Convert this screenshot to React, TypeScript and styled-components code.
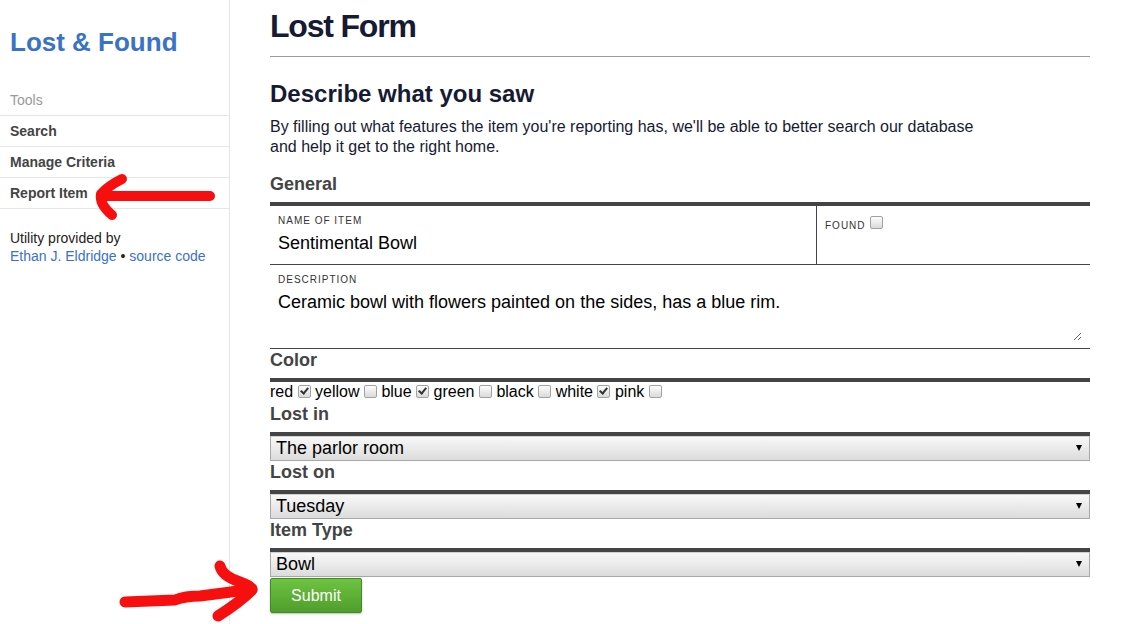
import React from "react";
import styled, { createGlobalStyle } from "styled-components";

const GlobalStyle = createGlobalStyle`
  html, body { margin: 0; padding: 0; background: #fff; }
  body { font-family: "Liberation Sans", Arial, sans-serif; }
  * { box-sizing: border-box; }
`;

const Page = styled.div`
  position: relative;
  display: flex;
  min-height: 624px;
  font-family: "Liberation Sans", Arial, sans-serif;
`;

const Sidebar = styled.aside`
  width: 230px;
  flex: 0 0 230px;
  border-right: 1px solid #e6e6e6;
  min-height: 624px;
`;

const Brand = styled.h1`
  margin: 0;
  padding: 27px 10px 0;
  font-size: 26px;
  line-height: 30px;
  font-weight: bold;
  color: #3a72c8;
`;

const NavHeading = styled.div`
  margin-top: 28px;
  padding: 7px 10px 7px;
  font-size: 14px;
  line-height: 16px;
  color: #9a9a9a;
`;

const NavList = styled.nav`
  display: flex;
  flex-direction: column;
  border-bottom: 1px solid #e6e6e6;
`;

const NavItem = styled.a`
  display: block;
  border-top: 1px solid #e6e6e6;
  padding: 7px 10px;
  font-size: 14px;
  line-height: 16px;
  font-weight: bold;
  color: #444;
  text-decoration: none;
`;

const Credits = styled.p`
  margin: 20px 0 0;
  padding: 0 10px;
  font-size: 14px;
  line-height: 18px;
  color: #222;
`;

const Link = styled.a`
  color: #3a72c8;
  text-decoration: none;
`;

const Main = styled.main`
  width: 820px;
  margin-left: 40px;
`;

const Title = styled.h1`
  margin: 0;
  padding-top: 8px;
  font-size: 32px;
  line-height: 36px;
  font-weight: bold;
  color: #161a33;
  letter-spacing: -1.2px;
`;

const Rule = styled.hr`
  margin: 12px 0 0;
  border: 0;
  border-top: 1px solid #9c9c9c;
  height: 0;
`;

const Subtitle = styled.h2`
  margin: 23px 0 0;
  font-size: 24px;
  line-height: 28px;
  font-weight: bold;
  color: #161a33;
`;

const Intro = styled.p`
  margin: 9px 0 0;
  max-width: 710px;
  font-size: 16px;
  line-height: 20px;
  color: #161a33;
`;

const Section = styled.section<{ $gap?: number }>`
  margin-top: ${(p) => p.$gap ?? 0}px;
`;

const SectionLabel = styled.h3`
  margin: 0 0 8px;
  font-size: 18px;
  line-height: 20px;
  font-weight: bold;
  color: #444;
`;

const Bar = styled.div`
  border-top: 4px solid #444;
  position: relative;
`;

const FieldGrid = styled.div`
  display: grid;
  grid-template-columns: 546px 1fr;
`;

const Cell = styled.div<{ $side?: boolean; $wide?: boolean }>`
  grid-column: ${(p) => (p.$wide ? "1 / span 2" : "auto")};
  border-bottom: 1px solid #444;
  border-left: ${(p) => (p.$side ? "1px solid #444" : "0")};
  padding: 9px 8px 10px;
`;

const Caption = styled.label`
  display: block;
  font-size: 10px;
  line-height: 12px;
  letter-spacing: 1px;
  text-transform: uppercase;
  color: #333;
  margin-bottom: 5px;
`;

const InlineCaption = styled(Caption)`
  display: inline-flex;
  align-items: flex-start;
  gap: 3px;
  margin-top: 0;
`;

const ValueInput = styled.input`
  display: block;
  width: 100%;
  border: 0;
  padding: 0;
  margin: 0;
  font-family: "Liberation Sans", Arial, sans-serif;
  font-size: 18px;
  line-height: 22px;
  height: 22px;
  color: #000;
  background: transparent;
  outline: none;
`;

const TextArea = styled.textarea`
  display: block;
  width: 100%;
  height: 50px;
  border: 0;
  padding: 0;
  margin: 0 0 -3px;
  font-family: "Liberation Sans", Arial, sans-serif;
  font-size: 18px;
  line-height: 22px;
  color: #000;
  background: transparent;
  outline: none;
  resize: vertical;
`;

const Check = styled.input.attrs({ type: "checkbox" })`
  appearance: none;
  -webkit-appearance: none;
  position: relative;
  width: 13px;
  height: 13px;
  margin: 0;
  vertical-align: -1px;
  border: 1px solid #a2a2a2;
  border-radius: 2px;
  background: linear-gradient(#fdfdfd, #dadada);
  &:checked::after {
    content: "";
    position: absolute;
    left: 3px;
    top: 0px;
    width: 3px;
    height: 6px;
    border: solid #333;
    border-width: 0 2px 2px 0;
    transform: rotate(40deg);
  }
`;

const FoundCheck = styled(Check)`
  margin: -4px 0 0 1px;
`;

const ColorRow = styled.div`
  font-size: 16px;
  line-height: 20px;
  color: #000;
  height: 22px;
`;

const SelectWrap = styled(Bar)`
  &::after {
    content: "";
    position: absolute;
    right: 8px;
    top: 9px;
    border-left: 3px solid transparent;
    border-right: 3px solid transparent;
    border-top: 6px solid #000;
    pointer-events: none;
  }
`;

const Select = styled.select`
  appearance: none;
  -webkit-appearance: none;
  display: block;
  width: 100%;
  height: 25px;
  margin: 0;
  padding: 0 20px 1px 5px;
  border: 1px solid #a8a8a8;
  border-top-color: #d0d0d0;
  border-radius: 0;
  background: linear-gradient(#f8f8f8, #dcdcdc);
  font-family: "Liberation Sans", Arial, sans-serif;
  font-size: 18px;
  color: #000;
`;

const Submit = styled.button`
  display: block;
  width: 92px;
  height: 35px;
  margin: 1px 0 0;
  border: 1px solid #3f8b26;
  border-radius: 2px;
  background: linear-gradient(#6ec341, #4f9e2c);
  box-shadow: 0 1px 2px rgba(0, 0, 0, 0.25);
  color: #fff;
  font-family: "Liberation Sans", Arial, sans-serif;
  font-size: 16px;
`;

const Annotations = styled.svg`
  position: absolute;
  left: 0;
  top: 0;
  width: 1122px;
  height: 624px;
  pointer-events: none;
`;

const colors: [string, boolean][] = [
  ["red", true],
  ["yellow", false],
  ["blue", true],
  ["green", false],
  ["black", false],
  ["white", true],
  ["pink", false],
];

function Dropdown({ value, options }: { value: string; options: string[] }) {
  return (
    <SelectWrap>
      <Select defaultValue={value}>
        {options.map((o) => (
          <option key={o}>{o}</option>
        ))}
      </Select>
    </SelectWrap>
  );
}

export default function App() {
  return (
    <Page>
      <GlobalStyle />
      <Sidebar>
        <Brand>Lost &amp; Found</Brand>
        <NavHeading>Tools</NavHeading>
        <NavList>
          <NavItem href="#">Search</NavItem>
          <NavItem href="#">Manage Criteria</NavItem>
          <NavItem href="#">Report Item</NavItem>
        </NavList>
        <Credits>
          Utility provided by
          <br />
          <Link href="#">Ethan J. Eldridge</Link> • <Link href="#">source code</Link>
        </Credits>
      </Sidebar>
      <Main>
        <Title>Lost Form</Title>
        <Rule />
        <Subtitle>Describe what you saw</Subtitle>
        <Intro>
          By filling out what features the item you're reporting has, we'll be able to better search our database
          and help it get to the right home.
        </Intro>
        <Section $gap={17}>
          <SectionLabel>General</SectionLabel>
          <Bar>
            <FieldGrid>
              <Cell>
                <Caption>Name of item</Caption>
                <ValueInput defaultValue="Sentimental Bowl" />
              </Cell>
              <Cell $side>
                <InlineCaption>
                  Found <FoundCheck />
                </InlineCaption>
              </Cell>
              <Cell $wide>
                <Caption>Description</Caption>
                <TextArea defaultValue="Ceramic bowl with flowers painted on the sides, has a blue rim." />
              </Cell>
            </FieldGrid>
          </Bar>
        </Section>
        <Section $gap={1}>
          <SectionLabel>Color</SectionLabel>
          <Bar>
            <ColorRow>
              {colors.map(([c, on], i) => (
                <React.Fragment key={c}>
                  {i > 0 ? " " : ""}
                  {c} <Check defaultChecked={on} />
                </React.Fragment>
              ))}
            </ColorRow>
          </Bar>
        </Section>
        <Section>
          <SectionLabel>Lost in</SectionLabel>
          <Dropdown value="The parlor room" options={["The parlor room", "The kitchen", "The library"]} />
        </Section>
        <Section $gap={1}>
          <SectionLabel>Lost on</SectionLabel>
          <Dropdown value="Tuesday" options={["Monday", "Tuesday", "Wednesday"]} />
        </Section>
        <Section $gap={1}>
          <SectionLabel>Item Type</SectionLabel>
          <Dropdown value="Bowl" options={["Bowl", "Cup", "Plate"]} />
        </Section>
        <Submit type="submit">Submit</Submit>
      </Main>
      <Annotations viewBox="0 0 1122 624">
        <g fill="none" stroke="#f70f0f" strokeWidth={10} strokeLinecap="round" strokeLinejoin="round">
          <path d="M210 196 L150 196 L104 196" />
          <path d="M122 179 Q108 186 101 194 Q99 204 112 215" />
          <path d="M125 602 Q150 601 175 600 Q185 596 200 596 Q225 593 252 589" strokeWidth={11} />
          <path d="M220 566 Q222 576 240 582 Q252 586 252 590 Q240 602 218 616" strokeWidth={11} />
        </g>
      </Annotations>
    </Page>
  );
}
